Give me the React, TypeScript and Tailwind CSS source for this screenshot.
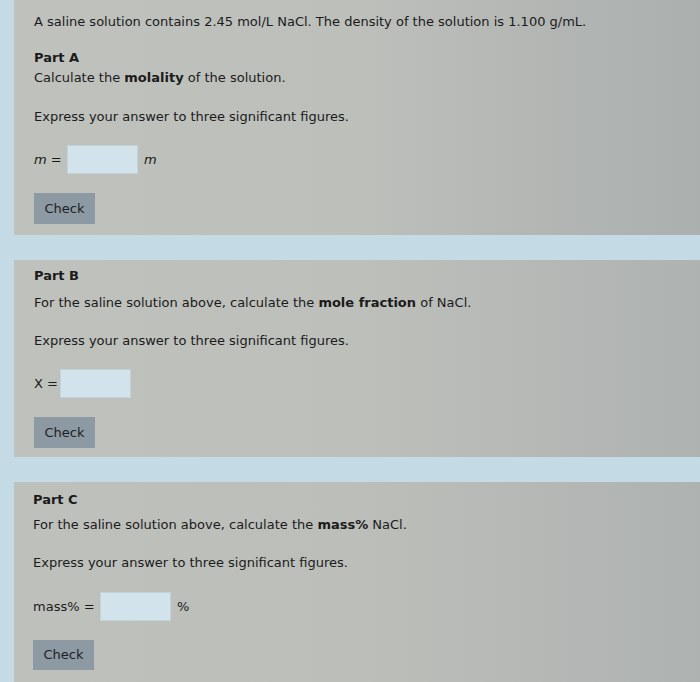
import React from 'react';

function Row({ label, unit, boxLeft }: { label: React.ReactNode; unit?: React.ReactNode; boxLeft: string }) {
  return (
    <div className="flex items-center h-[29px]">
      <span className={boxLeft}>{label}</span>
      <div className="w-[71px] h-[29px] bg-[#d3e3eb] border border-[#c4d3da]" />
      {unit && <span className="ml-[6px]">{unit}</span>}
    </div>
  );
}

function CheckButton({ h }: { h: string }) {
  return (
    <div className={`w-[61px] ${h} bg-[#8d99a3] flex items-center justify-center text-[#1c1f24]`}>
      Check
    </div>
  );
}

export default function App() {
  return (
    <div
      className="w-[700px] h-[682px] overflow-hidden bg-[#c4dae4] pl-[14px] flex flex-col text-[13px] leading-[20px] text-[#1b1b1b]"
      style={{ fontFamily: '"DejaVu Sans", Verdana, sans-serif' }}
    >
      {/* Part A */}
      <div className="h-[235px] shrink-0 bg-gradient-to-r from-[#bfc1bc] via-[#bcbfba] to-[#abafae] pl-[20px] pt-[12px]">
        <p>A saline solution contains 2.45 mol/L NaCl. The density of the solution is 1.100 g/mL.</p>
        <p className="mt-[16px] font-bold">Part A</p>
        <p>
          Calculate the <b>molality</b> of the solution.
        </p>
        <p className="mt-[19px]">Express your answer to three significant figures.</p>
        <div className="mt-[18px]">
          <Row
            label={<><i>m</i> =</>}
            unit={<i>m</i>}
            boxLeft="w-[33px]"
          />
        </div>
        <div className="mt-[19px]">
          <CheckButton h="h-[31px]" />
        </div>
      </div>

      <div className="h-[25px] shrink-0" />

      {/* Part B */}
      <div className="h-[197px] shrink-0 bg-gradient-to-r from-[#bfc1bc] via-[#bdbfba] to-[#aeb2b1] pl-[20px] pt-[6px]">
        <p className="font-bold">Part B</p>
        <p className="mt-[7px]">
          For the saline solution above, calculate the <b>mole fraction</b> of NaCl.
        </p>
        <p className="mt-[18px]">Express your answer to three significant figures.</p>
        <div className="mt-[18px]">
          <Row label="X =" boxLeft="w-[26px]" />
        </div>
        <div className="mt-[19px]">
          <CheckButton h="h-[31px]" />
        </div>
      </div>

      <div className="h-[25px] shrink-0" />

      {/* Part C */}
      <div className="flex-1 bg-gradient-to-r from-[#bec0bb] via-[#bcbeb9] to-[#aeb2b1] pl-[19px] pt-[8px]">
        <p className="font-bold">Part C</p>
        <p className="mt-[5px]">
          For the saline solution above, calculate the <b>mass%</b> NaCl.
        </p>
        <p className="mt-[18px]">Express your answer to three significant figures.</p>
        <div className="mt-[19px]">
          <Row label="mass% =" unit="%" boxLeft="w-[67px]" />
        </div>
        <div className="mt-[19px]">
          <CheckButton h="h-[30px]" />
        </div>
      </div>
    </div>
  );
}
